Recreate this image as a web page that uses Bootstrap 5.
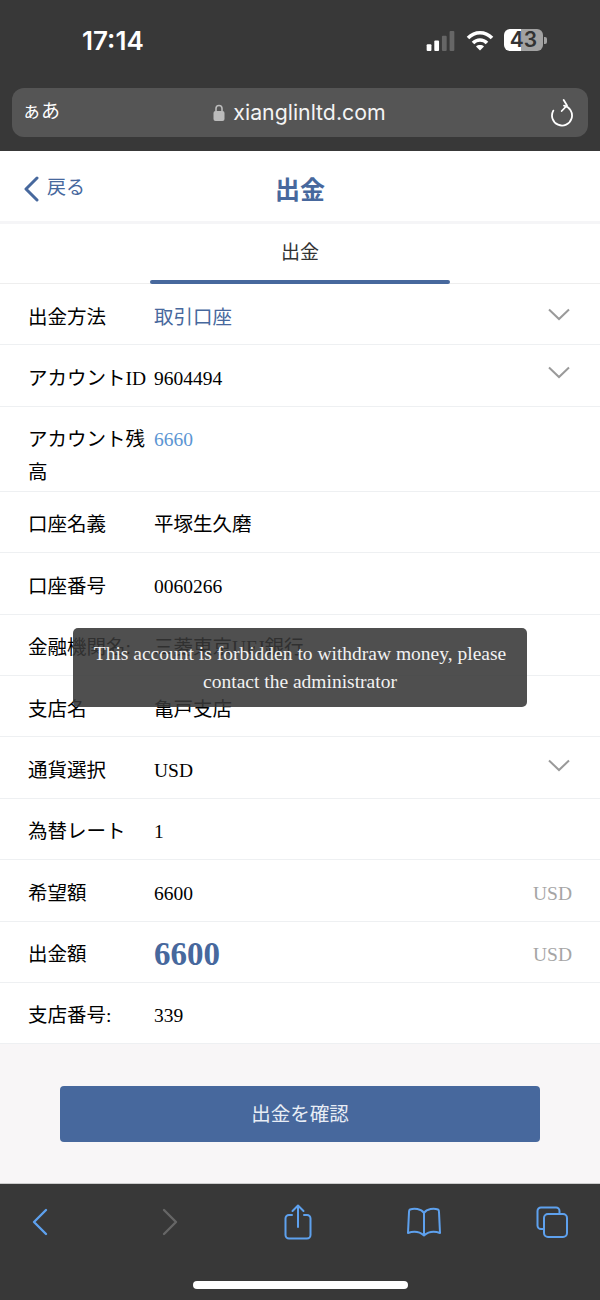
<!DOCTYPE html>
<html lang="ja">
<head>
    <meta charset="UTF-8">
    <link href="https://cdn.jsdelivr.net/npm/bootstrap@5.3.0/dist/css/bootstrap.min.css" rel="stylesheet">
    <meta name="viewport" content="width=device-width,initial-scale=1" />
    <style>
        body { width: 600px; height: 1300px; overflow: hidden; background: #fff; font-family: "Liberation Serif", "Noto Sans CJK JP", serif; color: #000; }
        .phone-sans { font-family: Inter, "Noto Sans CJK JP", sans-serif; }
        .safari-top { height: 151px; background: #383838; color: #fff; }
        .status-line { height: 88px; padding: 24px 53px 0 82px; }
        .clock { font-size: 26px; font-weight: 600; line-height: 34px; }
        .status-icons { gap: 10px; padding-top: 5px; }
        .batt { width: 39px; height: 22px; border-radius: 6px; font-size: 21px; font-weight: 600; line-height: 22px; text-align: center; color: #333; background: linear-gradient(90deg, #fff 44%, #a2a2a2 44%); }
        .batt-tip { width: 3px; height: 7px; background: #a2a2a2; border-radius: 0 2px 2px 0; margin-left: 1px; }
        .url-pill { height: 49px; margin: 0 12px; padding: 0 13px 0 10px; background: #555; border-radius: 12px; }
        .url-side { width: 110px; font-size: 19px; }
        .url-text { font-size: 21.3px; color: #f4f4f4; padding-left: 2px; }
        .page-head { height: 70px; padding: 0 22px; }
        .back-link { color: #47689d; font-size: 19px; margin-top: 6px; }
        .back-link span { margin-top: -2px; }
        .page-title { color: #47689d; font-size: 25px; font-weight: 700; margin-top: 10px; }
        .head-gap { height: 3px; background: #f5f5f7; }
        .tab-strip { height: 60px; border-bottom: 1px solid #eee; color: #333; font-size: 19px; }
        .tab-line { left: 150px; bottom: -1px; width: 300px; height: 4px; background: #47689d; border-radius: 2px; }
        .form-line { height: 61.4px; padding: 0 28px; border-bottom: 1px solid #eef0f2; font-size: 19.5px; }
        .form-line > div { padding-top: 6px; }
        .form-line.tall { height: 85px; padding-top: 16px; line-height: 33px; }
        .tall > div { padding-top: 0; }
        .line-label { width: 126px; flex: none; }
        .line-val { flex: 1; white-space: nowrap; }
        .blue-val { color: #47689d; }
        .sky-val { color: #5b95d3; }
        .big-val { color: #47689d; font-size: 33px; font-weight: 700; }
        .unit { color: #a5a5a5; }
        .chev { margin-right: 2px; margin-top: -5px; }
        .chev-low { margin-top: 0; }
        .chev-up { margin-top: -6px; }
        .toast-box { left: 73px; top: 628px; width: 454px; height: 79px; padding-top: 12px; background: rgba(55, 55, 55, .88); border-radius: 5px; color: #f2f2f2; font-size: 19.5px; line-height: 28px; text-align: center; }
        .submit-zone { height: 139px; background: #f8f6f7; padding: 42px 60px 0; }
        .btn-confirm { width: 480px; height: 56px; background: #47689d; border: 0; border-radius: 4px; color: #e8edf5; font-size: 19.5px; }
        .safari-bottom { height: 117px; background: #383838; border-top: 1px solid #ccc; }
        .tool-row { height: 76px; padding: 0 20px 0 12px; }
        .tool-cell { width: 56px; }
        .home-bar { width: 215px; height: 8px; background: #fff; border-radius: 4px; margin: 21px auto 0; }
    </style>
</head>

<body>
<div class="position-relative">
    <!-- ブラウザ上部 -->
    <div class="safari-top phone-sans">
        <div class="status-line d-flex justify-content-between align-items-start">
            <div class="clock">17:14</div>
            <div class="status-icons d-flex align-items-center">
                <svg width="31" height="21" viewBox="0 0 31 22"><rect x="1" y="15" width="5" height="7" rx="1" fill="#fff"/><rect x="9" y="11" width="5" height="11" rx="1" fill="#fff"/><rect x="17" y="6" width="5" height="16" rx="1" fill="#666"/><rect x="25" y="1" width="5" height="21" rx="1" fill="#666"/></svg>
                <svg width="28" height="21" viewBox="0 0 28 21" fill="none" stroke="#fff" stroke-width="3.600"><path d="M2 8C9 1 19 1 26 8"/><path d="M7 13C11 9 17 9 21 13"/><path d="M14 20.500L10 16.500C12 14.600 16 14.600 18 16.500Z" fill="#fff" stroke="none"/></svg>
                <div class="d-flex align-items-center">
                    <div class="batt">43</div>
                    <div class="batt-tip"></div>
                </div>
            </div>
        </div>
        <div class="url-pill d-flex align-items-center">
            <div class="url-side">ぁあ</div>
            <div class="flex-grow-1 d-flex align-items-center justify-content-center gap-2 url-text">
                <svg width="12" height="17" viewBox="0 0 11 17"><path d="M2.500 7V4.500a3 3 0 0 1 6 0V7" fill="none" stroke="#bbb" stroke-width="1.600"/><rect y="7" width="11" height="10" rx="2" fill="#bbb"/></svg>
                <span>xianglinltd.com</span>
            </div>
            <div class="url-side d-flex justify-content-end">
                <svg width="24" height="28" viewBox="0 0 24 28" fill="none" stroke="#fff" stroke-width="1.800" stroke-linecap="round" stroke-linejoin="round"><path d="M13 6.700A10 10 0 1 1 2.300 11.600"/><path d="M12.700 1L16 6.500L10.700 12"/></svg>
            </div>
        </div>
    </div>

    <!-- ヘッダー -->
    <div class="page-head position-relative d-flex align-items-center justify-content-center">
        <div class="back-link position-absolute start-0 d-flex align-items-center gap-2 ps-4">
            <svg width="15" height="26" viewBox="0 0 15 26" fill="none" stroke="#47689d" stroke-width="3" stroke-linecap="round" stroke-linejoin="round"><path d="M13 2L2 13L13 24"/></svg>
            <span>戻る</span>
        </div>
        <div class="page-title">出金</div>
    </div>
    <div class="head-gap"></div>
    <div class="tab-strip position-relative d-flex align-items-center justify-content-center">
        <span>出金</span>
        <div class="tab-line position-absolute"></div>
    </div>

    <!-- フォーム -->
    <div class="form-line d-flex align-items-center">
        <div class="line-label">出金方法</div>
        <div class="line-val blue-val">取引口座</div>
        <svg class="chev chev-low" width="22" height="13" viewBox="0 0 22 13" fill="none" stroke="#9a9a9a" stroke-width="2"><path d="M1 1.500L11 11L21 1.500"/></svg>
    </div>
    <div class="form-line d-flex align-items-center">
        <div class="line-label">アカウントID</div>
        <div class="line-val">9604494</div>
        <svg class="chev chev-up" width="22" height="13" viewBox="0 0 22 13" fill="none" stroke="#9a9a9a" stroke-width="2"><path d="M1 1.500L11 11L21 1.500"/></svg>
    </div>
    <div class="form-line tall d-flex align-items-start">
        <div class="line-label">アカウント残高</div>
        <div class="line-val sky-val">6660</div>
    </div>
    <div class="form-line d-flex align-items-center">
        <div class="line-label">口座名義</div>
        <div class="line-val">平塚生久磨</div>
    </div>
    <div class="form-line d-flex align-items-center">
        <div class="line-label">口座番号</div>
        <div class="line-val">0060266</div>
    </div>
    <div class="form-line d-flex align-items-center">
        <div class="line-label">金融機関名:</div>
        <div class="line-val">三菱東京UFJ銀行</div>
    </div>
    <div class="form-line d-flex align-items-center">
        <div class="line-label">支店名</div>
        <div class="line-val">亀戸支店</div>
    </div>
    <div class="form-line d-flex align-items-center">
        <div class="line-label">通貨選択</div>
        <div class="line-val">USD</div>
        <svg class="chev" width="22" height="13" viewBox="0 0 22 13" fill="none" stroke="#9a9a9a" stroke-width="2"><path d="M1 1.500L11 11L21 1.500"/></svg>
    </div>
    <div class="form-line d-flex align-items-center">
        <div class="line-label">為替レート</div>
        <div class="line-val">1</div>
    </div>
    <div class="form-line d-flex align-items-center">
        <div class="line-label">希望額</div>
        <div class="line-val">6600</div>
        <div class="unit">USD</div>
    </div>
    <div class="form-line d-flex align-items-center">
        <div class="line-label">出金額</div>
        <div class="line-val big-val">6600</div>
        <div class="unit">USD</div>
    </div>
    <div class="form-line d-flex align-items-center">
        <div class="line-label">支店番号:</div>
        <div class="line-val">339</div>
    </div>

    <div class="submit-zone">
        <button type="button" class="btn btn-confirm">出金を確認</button>
    </div>

    <!-- ブラウザ下部 -->
    <div class="safari-bottom">
        <div class="tool-row d-flex align-items-center justify-content-between">
            <div class="tool-cell d-flex justify-content-center">
                <svg width="16" height="28" viewBox="0 0 16 28" fill="none" stroke="#5ea1ee" stroke-width="2.400" stroke-linecap="round" stroke-linejoin="round"><path d="M14 2L2 14L14 26"/></svg>
            </div>
            <div class="tool-cell d-flex justify-content-center ps-1">
                <svg width="16" height="28" viewBox="0 0 16 28" fill="none" stroke="#666" stroke-width="2.400" stroke-linecap="round" stroke-linejoin="round"><path d="M2 2L14 14L2 26"/></svg>
            </div>
            <div class="tool-cell d-flex justify-content-center ps-1">
                <svg width="28" height="36" viewBox="0 0 28 36" fill="none" stroke="#5ea1ee" stroke-width="2" stroke-linecap="round" stroke-linejoin="round"><path d="M8 11H5a3.500 3.500 0 0 0-3.500 3.500V31A3.500 3.500 0 0 0 5 34.500H23a3.500 3.500 0 0 0 3.500-3.500V14.500A3.500 3.500 0 0 0 23 11H20"/><path d="M14 23V2"/><path d="M8.500 7L14 1.500L19.500 7"/></svg>
            </div>
            <div class="tool-cell d-flex justify-content-center">
                <svg width="34" height="30" viewBox="0 0 34 30" fill="none" stroke="#5ea1ee" stroke-width="2" stroke-linecap="round" stroke-linejoin="round"><path d="M17 6C14 1.500 7 1 3 2.500Q2 3 2 5L1 26C7 24 13 25 17 28.500C21 25 27 24 33 26L32 5Q32 3 31 2.500C27 1 20 1.500 17 6Z"/><path d="M17 6V28"/></svg>
            </div>
            <div class="tool-cell d-flex justify-content-center">
                <svg width="32" height="32" viewBox="0 0 32 32" fill="none" stroke="#5ea1ee" stroke-width="2" stroke-linecap="round" stroke-linejoin="round"><path d="M7 23H5a3.500 3.500 0 0 1-3.500-3.500V5A3.500 3.500 0 0 1 5 1.500H20A3.500 3.500 0 0 1 23.500 5V8"/><rect x="8" y="8" width="23" height="23" rx="4"/></svg>
            </div>
        </div>
        <div class="home-bar"></div>
    </div>

    <!-- エラーメッセージ -->
    <div class="toast-box position-absolute">This account is forbidden to withdraw money, please<br>contact the administrator</div>
</div>
</body>
</html>
